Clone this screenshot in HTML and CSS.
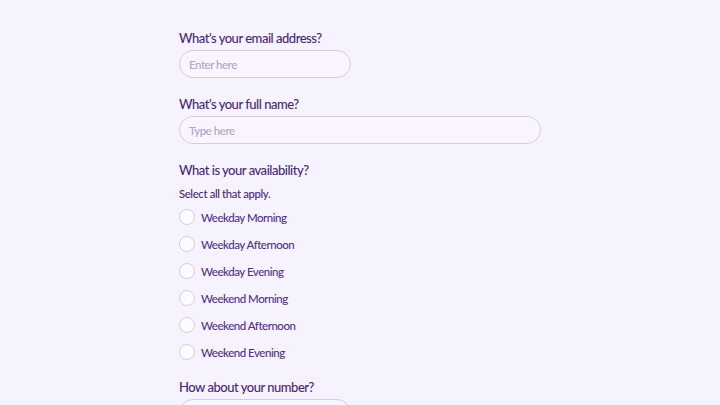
FILE: index.html
```html
<!DOCTYPE html>
<html lang="en">
<head>
  <meta charset="UTF-8">
  <title>Signup Form</title>
  <link rel="stylesheet" href="styles.css">
</head>
<body>
  <form class="form">
    <div class="field">
      <label class="question" for="email">What's your email address?</label>
      <input type="email" id="email" class="input short" placeholder="Enter here">
    </div>

    <div class="field">
      <label class="question" for="name">What's your full name?</label>
      <input type="text" id="name" class="input" placeholder="Type here">
    </div>

    <div class="field">
      <div class="question">What is your availability?</div>
      <div class="hint">Select all that apply.</div>
      <div class="options">
        <label class="option"><input type="checkbox"><span class="circle"></span>Weekday Morning</label>
        <label class="option"><input type="checkbox"><span class="circle"></span>Weekday Afternoon</label>
        <label class="option"><input type="checkbox"><span class="circle"></span>Weekday Evening</label>
        <label class="option"><input type="checkbox"><span class="circle"></span>Weekend Morning</label>
        <label class="option"><input type="checkbox"><span class="circle"></span>Weekend Afternoon</label>
        <label class="option"><input type="checkbox"><span class="circle"></span>Weekend Evening</label>
      </div>
    </div>

    <div class="field">
      <label class="question" for="phone">How about your number?</label>
      <input type="tel" id="phone" class="input short" placeholder="Enter here">
    </div>
  </form>
</body>
</html>
```

FILE: styles.css
```css
* {
  box-sizing: border-box;
}
body {
  margin: 0;
  font-family: Lato, 'Open Sans', sans-serif;
  font-weight: 500;
  letter-spacing: -0.03em;
  background: #f6f3fe;
  color: #4a2870;
}
.form {
  width: 362px;
  margin: 0 auto;
  padding-top: 28px;
  display: flex;
  flex-direction: column;
  gap: 16px;
}
.field {
  display: flex;
  flex-direction: column;
  align-items: flex-start;
}
.question {
  font-size: 13px;
  line-height: 20px;
  margin-bottom: 2px;
}
.input {
  width: 100%;
  height: 28px;
  border: 1.5px solid #d7cce6;
  border-radius: 14px;
  background: #f8f5ff;
  padding: 0 9px;
  font-family: inherit;
  font-weight: 500;
  font-size: 11.5px;
  letter-spacing: inherit;
  color: #4a2870;
  outline: none;
}
.input::placeholder {
  color: #b2a3c7;
}
.input.short {
  width: 172px;
}
.hint {
  font-size: 11.25px;
  letter-spacing: -0.03em;
  line-height: 18px;
  margin-top: 3px;
}
.options {
  display: flex;
  flex-direction: column;
  gap: 9px;
  margin-top: 5px;
}
.option {
  display: flex;
  align-items: center;
  gap: 6px;
  height: 18px;
  font-size: 11.5px;
  color: #53307f;
  cursor: pointer;
}
.option input {
  display: none;
}
.circle {
  width: 16px;
  height: 16px;
  border: 1.5px solid #d7cce6;
  border-radius: 50%;
  background: #fcfbff;
}
.option input:checked + .circle {
  background: #6b3fa0;
  border-color: #6b3fa0;
}
```
